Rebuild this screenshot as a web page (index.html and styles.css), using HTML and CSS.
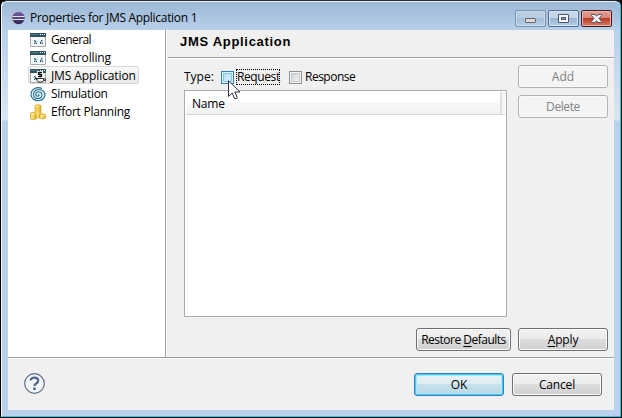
FILE: index.html
```html
<!DOCTYPE html>
<html lang="en">
<head>
<meta charset="utf-8">
<title>Properties for JMS Application 1</title>
<link rel="stylesheet" href="styles.css">
</head>
<body>
<svg width="0" height="0" class="defs">
  <defs>
    <linearGradient id="orb" x1="0" y1="0" x2="0" y2="1"><stop offset="0" stop-color="#7764a8"/><stop offset="1" stop-color="#2c2255"/></linearGradient>
    <linearGradient id="gold" x1="0" y1="0" x2="1" y2="0"><stop offset="0" stop-color="#f5d65c"/><stop offset=".4" stop-color="#f9e07a"/><stop offset="1" stop-color="#e0ae28"/></linearGradient>
    <symbol id="win" viewBox="0 0 16 14">
      <path d="M.5.5h15v13H.5z" fill="#f4f7f8" stroke="#a9a9a9"/>
      <path d="M0 0h16v4H0z" fill="#2d5361"/>
      <path d="M1 1h8v1H1z" fill="#54798a"/>
      <path d="M10 1h1v1h-1zM12 1h1v1h-1zM14 1h1v1h-1z" fill="#fff"/>
      <path d="M4 7h2v1h1v3H4zM10 8h1V7h2v4h-3z" fill="#9fc3d2"/>
      <path d="M4 7h1v1H4zM5 8h1v1H5zM4 10h1v1H4zM6 10h1v1H6zM11 7h1v1h-1zM10 9h1v2h-1zM12 10h1v1h-1z" fill="#2b5f76"/>
    </symbol>
  </defs>
</svg>
<div class="window">
  <header class="titlebar">
    <svg class="orb" width="15" height="14" viewBox="0 0 15 14"><circle cx="6.500" cy="7" r="6" fill="#e6b68a"/><circle cx="7.500" cy="7" r="6.200" fill="url(#orb)"/><path d="M1.500 5.500h12M1.500 8.500h12" stroke="#dfe2f5" stroke-width="1"/></svg>
    <span class="caption">Properties for JMS Application 1</span>
    <div class="controls">
      <span class="ctl"><svg width="29" height="15"><rect x="9.500" y="7.500" width="10" height="4" rx=".5" fill="#dedbd5" stroke="#66656b"/></svg></span>
      <span class="ctl max"><svg width="29" height="15"><rect x="9.500" y="3.500" width="10" height="8" rx=".5" fill="#f7f7f7" stroke="#4c5367"/><rect x="12.500" y="6.500" width="4" height="2" fill="#91afce" stroke="#4c5367"/></svg></span>
      <span class="ctl close"><svg width="29" height="15"><path d="M9.500 3.500h3.500l1.500 1.800L16 3.500h3.500v1L17 7.500l2.500 3v1H16l-1.500-1.800L13 11.500H9.500v-1l2.500-3-2.500-3z" fill="#f7f7f7" stroke="#535666"/></svg></span>
    </div>
  </header>
  <main class="body">
    <nav class="tree">
      <div class="item"><svg width="16" height="14"><use href="#win"/></svg><span class="t-gen">General</span></div>
      <div class="item"><svg width="16" height="14"><use href="#win"/></svg><span class="t-con">Controlling</span></div>
      <div class="item selected"><svg width="16" height="14"><use href="#win"/><path d="M7 2h6v7H7z" fill="#f4f7f8"/><path d="M7 9.500h6.500v2l-1.200 1.500H8.200L7 11.500z" fill="#fff" stroke="#333"/><path d="M5 9.500h2M13.500 10h2v1.500h-2" fill="none" stroke="#333"/><path d="M12 3.500H8.500v2h3v2H8M10 2.500v6" fill="none" stroke="#111" stroke-width="1.200"/></svg><span class="t-jms">JMS Application</span></div>
      <div class="item"><svg width="16" height="15" viewBox="0 0 16 15"><ellipse cx="8" cy="7.500" rx="7.500" ry="7" fill="#edf6f9"/><path d="M12 1.500C7-.8 1 2 1 7.500c0 4 4 6.500 8 6.200 4-.3 6.500-4 5.900-7.200C14 3 9 1.600 6 3.300 3 5 2.600 9 5 10.800c2.500 1.700 6.500.7 7-2.300.5-3-3-4.500-5-3.200-2 1.200-1.500 3.800.5 3.900 1.600 0 1.900-1.500.9-2.100" fill="none" stroke="#216a8a" stroke-width="1.150"/></svg><span class="t-sim">Simulation</span></div>
      <div class="item"><svg width="16" height="16" viewBox="0 0 16 16"><path d="M5 1.500q3.500-2 6 0V14H5z" fill="url(#gold)" stroke="#d5a62c" stroke-width=".7"/><path d="M5 4q3 1.300 6 0M5 6.500q3 1.300 6 0" fill="none" stroke="#d5a62c" stroke-width=".6"/><path d="M9.500 10.500q3-1.500 6 0V14q-3 2-6 0z" fill="url(#gold)" stroke="#cf9b22" stroke-width=".7"/><path d="M.5 9q2.500-1.500 5.500 0v6q-3 1-5.500 0z" fill="url(#gold)" stroke="#cf9b22" stroke-width=".7"/><path d="M.8 9.500q2.500 1.500 5 0M9.800 11q3 1.500 5.500 0" fill="none" stroke="#fff2a8" stroke-width=".8"/></svg><span class="t-eff">Effort Planning</span></div>
    </nav>
    <section class="page">
      <h1><span>JMS Application</span></h1>
      <div class="content">
        <div class="left">
          <div class="types">
            <span class="label t-type">Type:</span>
            <span class="check hot"><svg class="cursor" width="13" height="20" viewBox="0 0 13 20"><path d="M.5.800v15.700l3.700-3.500 2.500 5.800q1.500.4 2.600-1.100L6.900 12h5z" fill="#fff" stroke="#2b2b45"/></svg></span>
            <span class="focus"><span class="t-req">Request</span></span>
            <span class="check"></span>
            <span class="label t-res">Response</span>
          </div>
          <div class="table"><div class="thead"><span class="t-name">Name</span></div></div>
        </div>
        <div class="side">
          <button class="btn" disabled><span class="t-add">Add</span></button>
          <button class="btn" disabled><span class="t-del">Delete</span></button>
        </div>
      </div>
      <div class="actions">
        <button class="btn wide"><span class="t-restore">Restore <u>D</u>efaults</span></button>
        <button class="btn"><span class="t-apply"><u>A</u>pply</span></button>
      </div>
    </section>
  </main>
  <footer class="footer">
    <svg class="help" width="22" height="22" viewBox="0 0 22 22"><circle cx="10.500" cy="10.500" r="9.800" fill="#f3f4f6" stroke="#5c6e8d" stroke-width="1.200"/><path d="M6.600 7.300Q7 4.700 10.500 4.700t3.700 2.900q0 1.700-2 2.900-1.700 1-1.700 2.500" fill="none" stroke="#52678c" stroke-width="2.200"/><path d="M9.200 14.500h2.600V17H9.200z" fill="#52678c"/></svg>
    <button class="btn default"><span class="t-ok">OK</span></button>
    <button class="btn"><span class="t-can">Cancel</span></button>
  </footer>
</div>
</body>
</html>
```
FILE: styles.css
```css
* { box-sizing: border-box; }
body { margin: 0; background: #000; font: 12px/18px "Open Sans", "Noto Sans", sans-serif; color: #000; overflow: hidden; }
.defs { position: absolute; }
.window { width: 620px; height: 417px; margin-left: 1px; padding: 0 6px 6px; border: 1px solid #fff; border-top: 1px solid #26262b; border-right-color: #1bcbe5; border-bottom-color: #1bcbe5; border-left-color: #f5faff; border-radius: 6px 6px 0 0; background: linear-gradient(#9bb7d5, #b8d0ea 29px, #dae6f4 119px, #b9d1ea 120px); box-shadow: inset 0 1px #edf3fa; display: flex; flex-direction: column; }
.titlebar { height: 29px; flex: none; display: flex; align-items: flex-start; padding-left: 3px; }
.orb { margin-top: 10px; }
.caption { margin: 8px auto 0 4px; white-space: nowrap; letter-spacing: -.3px; }
.controls { display: flex; gap: 2px; padding: 9px 2px 0 0; }
.ctl { width: 31px; height: 17px; border: 1px solid #7d94b1; border-radius: 2px; background: linear-gradient(#b9cde2 47%, #a4bdd9 50%, #b8d0e9); box-shadow: inset 0 0 0 1px #c8daed; }
.ctl.max { border-color: #536c91; background: linear-gradient(#c5d6e9 47%, #99b6d5 50%, #b4cee9); box-shadow: inset 0 0 0 1px #d6e4f3; }
.ctl.close { border-color: #471923; background: linear-gradient(#e3a095, #d58678 47%, #b93922 50%, #d58069); box-shadow: inset 0 0 0 1px #e9b5ac; }
.ctl svg { display: block; }
.body { height: 327px; flex: none; display: flex; background: #f0f0f0; }
.tree { width: 158px; flex: none; background: #fff; border-right: 1px solid #a0a0a0; box-shadow: 1px 0 #fff; padding-left: 20px; }
.item { height: 18px; display: flex; align-items: center; gap: 5px; width: max-content; padding: 2px 3px 0 2px; white-space: nowrap; }
.item svg { flex: none; overflow: visible; }
.item.selected { background: linear-gradient(#fafafa, #e7e7e7); border-radius: 3px; box-shadow: inset 0 0 0 1px #d9d9d9; }
.t-gen { letter-spacing: -.6px; }
.t-con { letter-spacing: -.15px; }
.t-jms { letter-spacing: -.1px; }
.t-sim { letter-spacing: -.3px; }
.t-eff { letter-spacing: -.25px; }
.page { flex: 1; min-width: 0; padding-left: 2px; }
h1 { margin: 0; height: 28px; border-bottom: 1px solid #a0a0a0; box-shadow: 0 1px #fff; padding: 2px 0 0 12px; font: bold 13px/20px "Liberation Sans", sans-serif; letter-spacing: .7px; white-space: nowrap; }
.content { display: flex; padding: 7px 0 0 16px; gap: 11px; }
.left { width: 323px; }
.types { display: flex; align-items: center; height: 25px; white-space: nowrap; padding-bottom: 1px; }
.t-type { width: 37px; }
.check { position: relative; width: 13px; height: 13px; border: 1px solid #8e8f8f; background: linear-gradient(135deg, #cbcfd5, #f6f6f6); box-shadow: inset 0 0 0 1px #f4f4f4, inset 0 0 0 2px #c5c9d0; }
.check.hot { border-color: #3c7fb1; background: linear-gradient(135deg, #a8daf8, #e5f6fe); box-shadow: inset 0 0 0 1px #def3fd, inset 0 0 0 2px #83c5eb; }
.cursor { position: absolute; left: 6px; top: 8px; z-index: 2; overflow: visible; }
.focus { width: 44px; height: 16px; margin: 0 9px 0 2px; border: 1px dotted #000; line-height: 14px; }
.t-req { letter-spacing: -.4px; }
.t-res { margin-left: 3px; letter-spacing: -.5px; }
.table { height: 227px; border: 1px solid #a9abaf; background: #fff; padding: 1px; }
.thead { height: 23px; padding: 3px 0 0 6px; border-bottom: 1px solid #d5d5d5; background: linear-gradient(#fff 45%, #f7f8fa 48%, #f1f2f4); box-shadow: inset -3px 0 #f6f6f6, inset -5px 0 #dedfe1; }
.t-name { letter-spacing: -.2px; }
.side { display: flex; flex-direction: column; gap: 7px; }
.btn { width: 90px; height: 23px; padding: 0; border: 1px solid #707070; border-radius: 3px; background: linear-gradient(#f2f2f2, #ebebeb 48%, #ddd 50%, #cfcfcf); box-shadow: inset 0 0 0 1px #fafafa; font: inherit; color: #000; line-height: 19px; white-space: nowrap; }
.btn:disabled { border-color: #adb2b5; background: #f4f4f4; color: #838383; }
.btn.wide { width: 95px; }
.btn.default { border-color: #3c7fb1; box-shadow: inset 0 0 0 1px #41cdf3, inset 0 0 0 2px #a5e6fa; background: linear-gradient(#eaf4f8, #dcecf2 48%, #c8e1ec 50%, #b8d8e5); }
.t-restore { letter-spacing: -.5px; }
.t-del { letter-spacing: -.4px; }
.t-apply, .t-can { letter-spacing: -.15px; }
u { text-underline-offset: 2px; text-decoration-skip-ink: none; }
.actions { display: flex; justify-content: flex-end; gap: 7px; padding: 11px 6px 0 0; }
.footer { flex: 1; display: flex; gap: 8px; align-items: flex-start; padding: 15px 12px 0 16px; border-top: 1px solid #a0a0a0; box-shadow: inset 0 1px #fff; background: #f0f0f0; }
.help { margin-right: auto; overflow: visible; }
```
